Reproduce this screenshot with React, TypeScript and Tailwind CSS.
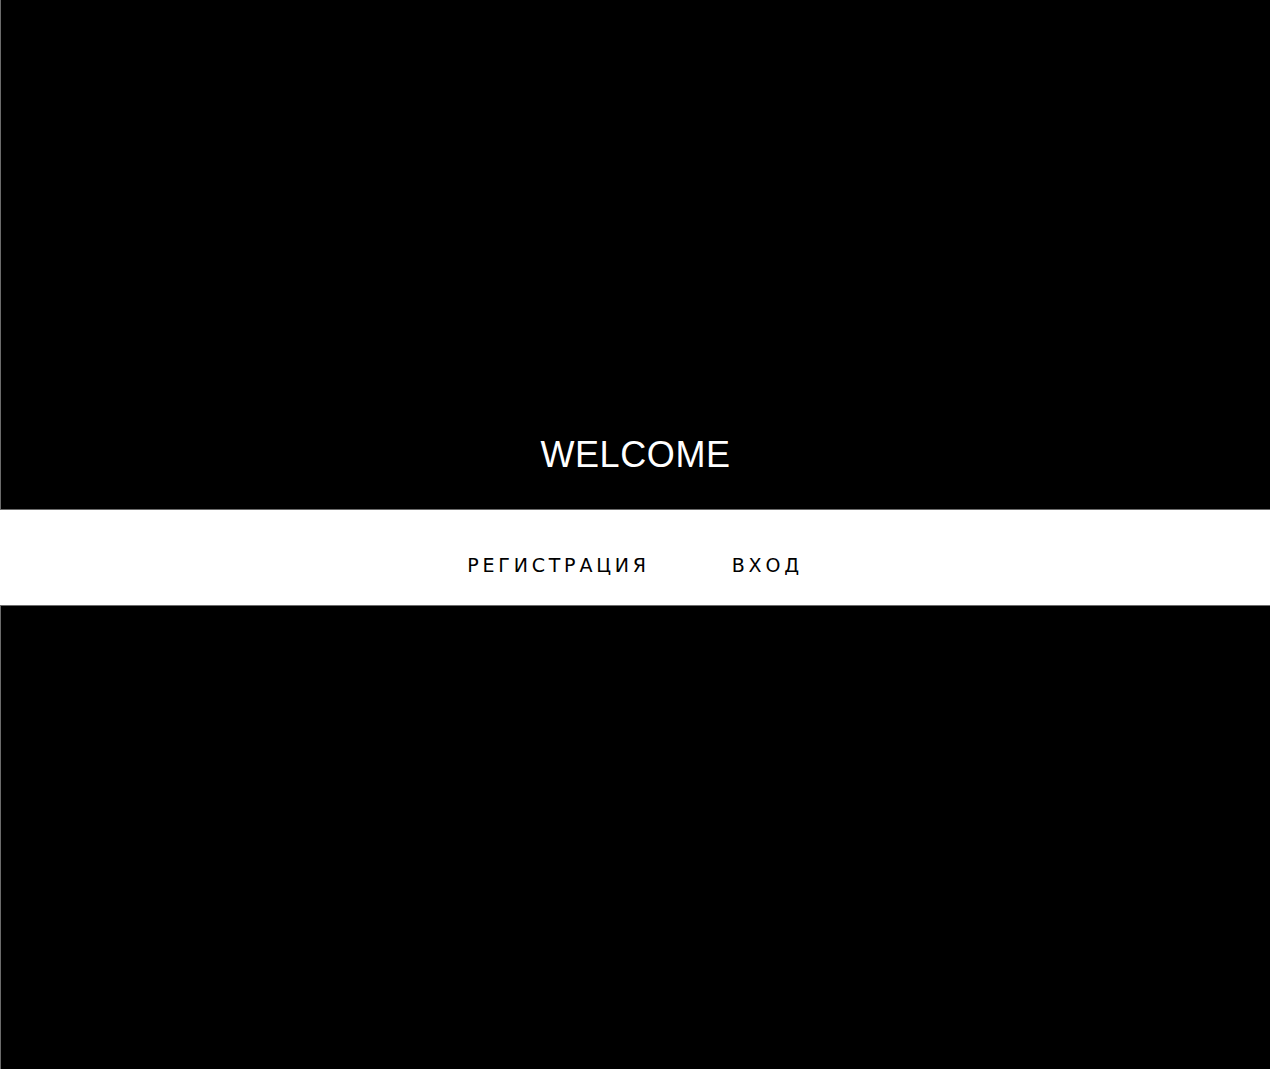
import React from 'react';

export default function App() {
  return (
    <div className="min-h-[1069px] flex flex-col bg-black font-['Liberation_Sans',Arial,sans-serif]">
      {/* Hero */}
      <section className="h-[510px] flex flex-col items-center justify-end border-l border-b border-[#6b6b6b] pb-[36px]">
        <h1 className="text-white text-[36px] leading-none tracking-[0.6px]">WELCOME</h1>
      </section>

      {/* Nav */}
      <nav className="h-[95px] bg-white flex items-center justify-center gap-[82px] pt-[15px] font-['DejaVu_Sans',sans-serif]">
        <a className="text-black text-[19px] leading-none tracking-[3.8px] cursor-pointer">РЕГИСТРАЦИЯ</a>
        <a className="text-black text-[19px] leading-none tracking-[3.8px] cursor-pointer">ВХОД</a>
      </nav>

      <section className="flex-1 border-l border-t border-[#6b6b6b]" />
    </div>
  );
}
